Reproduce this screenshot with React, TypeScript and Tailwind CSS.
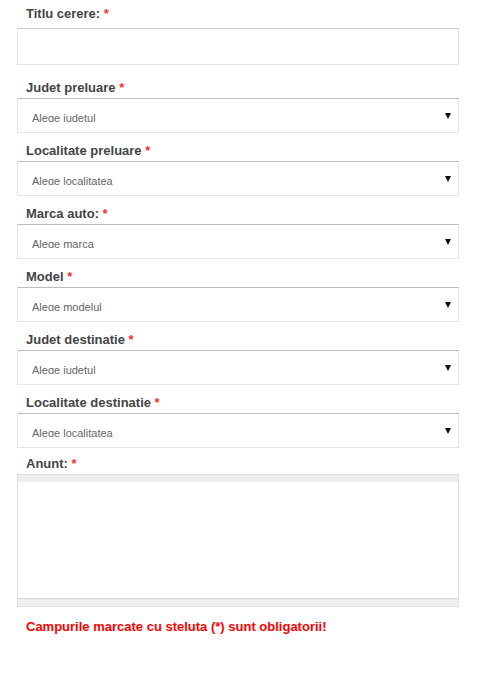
import React from "react";

// fields of the request form
const selects = [
  { label: "Judet preluare", placeholder: "Alege iudetul" },
  { label: "Localitate preluare", placeholder: "Alege localitatea" },
  { label: "Marca auto:", placeholder: "Alege marca" },
  { label: "Model", placeholder: "Alege modelul" },
  { label: "Judet destinatie", placeholder: "Alege iudetul" },
  { label: "Localitate destinatie", placeholder: "Alege localitatea" },
];

const Label: React.FC<{ text: string }> = ({ text }) => (
  <div className="pl-[9px] h-4 leading-4 text-[13px] font-bold text-[#444]">
    {text} <span className="text-[#e33]">*</span>
  </div>
);

const FakeSelect: React.FC<{ placeholder: string }> = ({ placeholder }) => (
  <div className="relative h-[35px] border border-[#e6e6e6] border-t-[#bbb] bg-white">
    <div className="absolute left-[14px] top-[13px] h-[10px] overflow-hidden text-[11px] leading-[12px] text-[#666]">
      {placeholder}
    </div>
    <svg
      className="absolute right-[7px] top-[14px]"
      width="6"
      height="6"
      viewBox="0 0 6 6"
    >
      <polygon points="0,0 6,0 3,6" fill="#111" />
    </svg>
  </div>
);

const App: React.FC = () => {
  return (
    <div className="w-[500px] h-[676px] bg-white font-['Liberation_Sans',Arial,sans-serif]">
      <div className="w-[442px] ml-[17px] pt-[6px]">
        <Label text="Titlu cerere:" />
        <div className="mt-[6px] h-[37px] border border-[#e3e3e3] border-t-[#c8c8c8] bg-white"></div>

        <div className="mt-[15px] flex flex-col gap-[10px]">
          {selects.map((s, i) => (
            <div key={i}>
              <Label text={s.label} />
              <div className="mt-[2px]">
                <FakeSelect placeholder={s.placeholder} />
              </div>
            </div>
          ))}
        </div>

        <div className="mt-[8px]">
          <Label text="Anunt:" />
          <div className="mt-[2px] h-[133px] border border-[#e0e0e0] flex flex-col">
            <div className="h-[7px] bg-[#eeeeee]"></div>
            <div className="flex-1 bg-white"></div>
            <div className="h-[8px] bg-[#eeeeee] border-t border-[#d6d6d6]"></div>
          </div>
        </div>

        <div className="mt-[12px] pl-[9px] text-[13px] leading-4 font-bold text-[#ff0000]">
          Campurile marcate cu steluta (*) sunt obligatorii!
        </div>
      </div>
    </div>
  );
};

export default App;
